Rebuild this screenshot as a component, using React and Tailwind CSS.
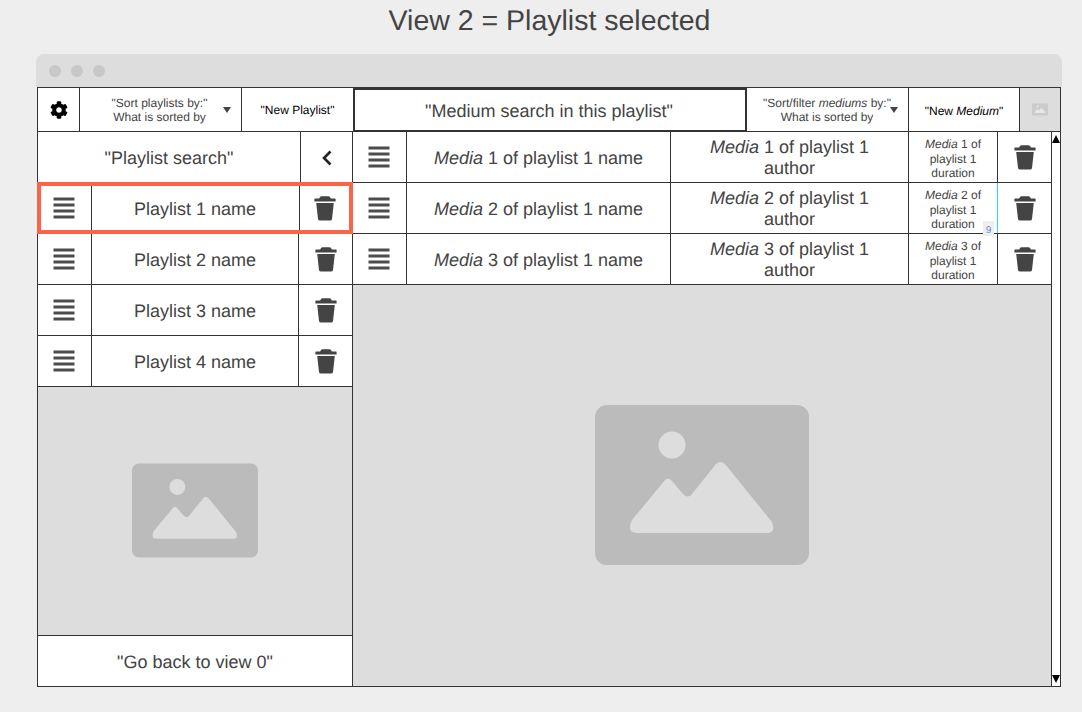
import React from "react";
import { FaCog } from "react-icons/fa";

const Bars = () => (
  <svg width="23" height="22" viewBox="0 0 23 22" className="block">
    <g fill="#4c4c4c">
      <rect x="0.5" y="0.5" width="21" height="3" />
      <rect x="0.5" y="6.5" width="21" height="3" />
      <rect x="0.5" y="12.5" width="21" height="3" />
      <rect x="0.5" y="18.5" width="21" height="3" />
    </g>
  </svg>
);

const Trash = () => (
  <svg width="22" height="25" viewBox="0 0 22 25" className="block">
    <g fill="#444">
      <path d="M5 3 L6 1 Q6.5 0.2 7.5 0.2 L14.5 0.2 Q15.5 0.2 16 1 L17 3 Z" />
      <path d="M1 2.6 L21 2.6 Q21.6 2.6 21.6 3.4 L21.6 5.6 L0.4 5.6 L0.4 3.4 Q0.4 2.6 1 2.6 Z" />
      <path d="M2.2 7 L19.8 7 L18 23 Q17.8 24.6 16 24.6 L6 24.6 Q4.2 24.6 4 23 Z" />
    </g>
  </svg>
);

const Picture = ({ w, h, fg = "#bbb", bg = "#ddd" }) => (
  <svg width={w} height={h} viewBox="0 0 214 160" className="block">
    <rect width="214" height="160" rx="12" fill={fg} />
    <circle cx="77" cy="40" r="13.5" fill={bg} />
    <path
      d="M37 115 L70 75 Q73 71.5 77 76 L88 89 Q93 94 97 89 L121 59 Q125 55 130 59 L177 117 Q181 128 172 128 L42 128 Q31 128 37 115 Z"
      fill={bg}
    />
  </svg>
);

const Cell = ({ className = "", children }) => (
  <div className={`flex items-center justify-center text-center shrink-0 ${className}`}>{children}</div>
);

function PlaylistRow({ name, selected }) {
  return (
    <div
      className={
        selected
          ? "relative z-10 flex h-[52px] shrink-0 -mt-px -ml-px -mr-px border-4 border-[#ff6347]"
          : "flex h-[51px] shrink-0 border-b border-[#333]"
      }
    >
      <Cell className={selected ? "w-[51px] pr-[3px] border-r border-[#333]" : "w-[54px] border-r border-[#333]"}>
        <Bars />
      </Cell>
      <Cell className={`flex-1 !shrink text-[18px] pt-[2px] border-r border-[#333] ${selected ? "pr-[1px]" : ""}`}>
        {name}
      </Cell>
      <Cell className={selected ? "w-[49px]" : "w-[53px]"}>
        <Trash />
      </Cell>
    </div>
  );
}

function MediaRow({ n, badge }) {
  return (
    <div className="relative flex h-[51px] shrink-0 border-b border-[#333]">
      <Cell className="w-[54px] border-r border-[#333]">
        <Bars />
      </Cell>
      <Cell className="w-[264px] border-r border-[#333] text-[18px] pt-[2px]">
        <span>
          <i>Media</i> {n} of playlist 1 name
        </span>
      </Cell>
      <Cell className="w-[238px] border-r border-[#333] text-[18px] leading-[21px] px-4 pt-[2px]">
        <span>
          <i>Media</i> {n} of playlist 1 author
        </span>
      </Cell>
      <Cell className="w-[89px] border-r border-[#333] text-[12px] leading-[14.5px] px-3 pt-[4px]">
        <span>
          <i>Media</i> {n} of playlist 1 duration
        </span>
      </Cell>
      <Cell className="flex-1 !shrink">
        <Trash />
      </Cell>
      {badge && (
        <>
          <div className="absolute left-[644px] top-0 h-[50px] w-px bg-[#22e5e5]" />
          <div className="absolute left-[630px] top-[38px] w-[11px] h-[15px] bg-[#eeeeee] text-[#6d8fe8] text-[10px] leading-[19px] text-center">
            9
          </div>
        </>
      )}
    </div>
  );
}

export default function App() {
  return (
    <div
      className="w-[1082px] h-[712px] overflow-hidden bg-[#eeeeee] text-[#444] flex flex-col [text-rendering:geometricPrecision]"
      style={{ fontFamily: '"Liberation Sans", Arial, sans-serif' }}
    >
      <h1 className="h-[54px] pt-[4px] pl-[17px] text-center text-[28.5px] leading-[34px] font-normal text-[#444]">
        View 2 = Playlist selected
      </h1>
      <div className="ml-[36px] w-[1026px] h-[633px] flex flex-col">
        <div className="h-[33px] shrink-0 bg-[#dddddd] rounded-t-lg flex items-center gap-[10px] pl-[13px]">
          <div className="w-3 h-3 rounded-full bg-[#c8c8c8]" />
          <div className="w-3 h-3 rounded-full bg-[#c8c8c8]" />
          <div className="w-3 h-3 rounded-full bg-[#c8c8c8]" />
        </div>
        <div className="mx-px flex-1 flex flex-col border border-[#333] bg-white min-h-0">
          {/* toolbar */}
          <div className="flex h-[44px] shrink-0 border-b border-[#333]">
            <Cell className="w-[42px] border-r border-[#333]">
              <FaCog className="w-[18px] h-[18px] text-black" />
            </Cell>
            <Cell className="relative w-[162px] border-r border-[#333] text-[12px] leading-[14px] pr-[2px]">
              <span>
                "Sort playlists by:"
                <br />
                What is sorted by
              </span>
              <span className="absolute right-[10px] top-[19px] w-0 h-0 border-x-[4px] border-x-transparent border-t-[6px] border-t-[#444]" />
            </Cell>
            <Cell className="w-[111px] text-[12px] text-black">"New Playlist"</Cell>
            <Cell className="w-[394px] -mb-px border-2 border-[#333] text-[18px] pt-[2px] pr-[2px] box-border">
              "Medium search in this playlist"
            </Cell>
            <Cell className="relative w-[162px] border-r border-[#333] text-[12px] leading-[14px] pr-[1px]">
              <span>
                "Sort/filter <i>mediums</i> by:"
                <br />
                What is sorted by
              </span>
              <span className="absolute right-[10px] top-[19px] w-0 h-0 border-x-[4px] border-x-transparent border-t-[6px] border-t-[#444]" />
            </Cell>
            <Cell className="w-[111px] border-r border-[#333] text-[12px] text-black pt-[2px]">
              <span>
                "New <i>Medium</i>"
              </span>
            </Cell>
            <Cell className="flex-1 !shrink bg-[#dddddd]">
              <Picture w={16} h={13} fg="#cccccc" bg="#e8e8e8" />
            </Cell>
          </div>
          {/* body */}
          <div className="flex flex-1 min-h-0">
            <div className="w-[315px] shrink-0 flex flex-col border-r border-[#333]">
              <div className="flex h-[51px] shrink-0">
                <Cell className="w-[263px] border-r border-[#333] text-[18px] pt-[2px]">"Playlist search"</Cell>
                <Cell className="flex-1 !shrink">
                  <svg width="12" height="16" viewBox="0 0 12 16">
                    <path d="M9.5 1.5 L3 8 L9.5 14.5" fill="none" stroke="#222" strokeWidth="2.6" />
                  </svg>
                </Cell>
              </div>
              <PlaylistRow name="Playlist 1 name" selected />
              <PlaylistRow name="Playlist 2 name" />
              <PlaylistRow name="Playlist 3 name" />
              <PlaylistRow name="Playlist 4 name" />
              <div className="flex-1 bg-[#dddddd] border-b border-[#333] flex items-center justify-center pb-[1px]">
                <Picture w={126} h={95} />
              </div>
              <Cell className="h-[50px] shrink-0 text-[18px] pt-[2px]">"Go back to view 0"</Cell>
            </div>
            <div className="flex-1 flex flex-col border-r border-[#333] min-w-0">
              <MediaRow n={1} />
              <MediaRow n={2} badge />
              <MediaRow n={3} />
              <div className="flex-1 bg-[#dddddd] flex items-center justify-center pb-[1px]">
                <Picture w={214} h={160} />
              </div>
            </div>
            <div className="w-[8px] shrink-0 flex flex-col justify-between items-start">
              <span className="w-0 h-0 mt-[3px] border-x-[4.5px] border-x-transparent border-b-[8px] border-b-black" />
              <span className="w-0 h-0 mb-[3px] border-x-[4.5px] border-x-transparent border-t-[8px] border-t-black" />
            </div>
          </div>
        </div>
      </div>
    </div>
  );
}
